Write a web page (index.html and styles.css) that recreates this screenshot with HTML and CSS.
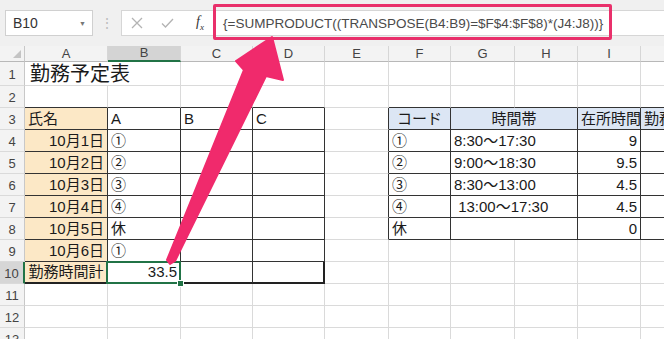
FILE: index.html
```html
<!DOCTYPE html>
<html>
<head>
  <title>勤務予定表</title>
  <link rel="stylesheet" href="styles.css">
</head>
<body>
  <div class="toolbar">
    <div class="namebox"><span>B10</span><span class="caret">▼</span></div>
    <div class="dots">⋮</div>
    <div class="fbar">
      <div class="fbtns">
        <svg width="12" height="12" viewBox="0 0 12 12"><path d="M1 1 L11 11 M11 1 L1 11" stroke="#b3b3b3" stroke-width="1.3" fill="none"/></svg>
        <svg width="13" height="12" viewBox="0 0 13 12"><path d="M1 6.5 L4.5 10 L12 2" stroke="#b3b3b3" stroke-width="1.3" fill="none"/></svg>
        <span class="fx">f<sub>x</sub></span>
      </div>
      <div class="formula">{=SUMPRODUCT((TRANSPOSE(B4:B9)=$F$4:$F$8)*(J4:J8))}</div>
    </div>
  </div>

  <table class="sheet">
    <colgroup>
      <col class="w-rh"><col class="w-a"><col class="w-b"><col class="w-c"><col class="w-d">
      <col class="w-e"><col class="w-f"><col class="w-g"><col class="w-h"><col class="w-i"><col class="w-j">
    </colgroup>
    <tr class="hrow">
      <td class="corner"><span class="tri"></span></td>
      <td class="ch">A</td><td class="ch sel">B</td><td class="ch">C</td><td class="ch">D</td>
      <td class="ch">E</td><td class="ch">F</td><td class="ch">G</td><td class="ch">H</td><td class="ch">I</td><td class="ch"></td>
    </tr>
    <tr class="r1">
      <td class="rh">1</td>
      <td class="title" colspan="2">勤務予定表</td><td></td><td></td><td></td><td></td><td></td><td></td><td></td><td></td>
    </tr>
    <tr>
      <td class="rh">2</td>
      <td class="top"></td><td class="top"></td><td class="top"></td><td class="top"></td><td></td>
      <td class="top"></td><td class="top"></td><td class="top"></td><td class="top"></td><td class="top"></td>
    </tr>
    <tr>
      <td class="rh">3</td>
      <td class="box y">氏名</td><td class="box">A</td><td class="box">B</td><td class="box">C</td><td class="lft"></td>
      <td class="box bl c">コード</td><td class="box bl c" colspan="2">時間帯</td><td class="box bl c">在所時間</td><td class="box bl">勤務時間</td>
    </tr>
    <tr>
      <td class="rh">4</td>
      <td class="box y r">10月1日</td><td class="box">①</td><td class="box"></td><td class="box"></td><td class="lft"></td>
      <td class="box">①</td><td class="box" colspan="2">8:30～17:30</td><td class="box r">9</td><td class="box"></td>
    </tr>
    <tr>
      <td class="rh">5</td>
      <td class="box y r">10月2日</td><td class="box">②</td><td class="box"></td><td class="box"></td><td class="lft"></td>
      <td class="box">②</td><td class="box" colspan="2">9:00～18:30</td><td class="box r">9.5</td><td class="box"></td>
    </tr>
    <tr>
      <td class="rh">6</td>
      <td class="box y r">10月3日</td><td class="box">③</td><td class="box"></td><td class="box"></td><td class="lft"></td>
      <td class="box">③</td><td class="box" colspan="2">8:30～13:00</td><td class="box r">4.5</td><td class="box"></td>
    </tr>
    <tr>
      <td class="rh">7</td>
      <td class="box y r">10月4日</td><td class="box">④</td><td class="box"></td><td class="box"></td><td class="lft"></td>
      <td class="box">④</td><td class="box" colspan="2">&nbsp;13:00～17:30</td><td class="box r">4.5</td><td class="box"></td>
    </tr>
    <tr>
      <td class="rh">8</td>
      <td class="box y r">10月5日</td><td class="box">休</td><td class="box"></td><td class="box"></td><td class="lft"></td>
      <td class="box">休</td><td class="box" colspan="2"></td><td class="box r">0</td><td class="box"></td>
    </tr>
    <tr>
      <td class="rh">9</td>
      <td class="box y r">10月6日</td><td class="box">①</td><td class="box"></td><td class="box"></td><td></td>
      <td></td><td></td><td></td><td></td><td></td>
    </tr>
    <tr>
      <td class="rh sel">10</td>
      <td class="box y tot c">勤務時間計</td><td class="box tot r cur">33.5</td><td class="box tot"></td><td class="box tot end"></td><td></td>
      <td></td><td></td><td></td><td></td><td></td>
    </tr>
    <tr>
      <td class="rh">11</td><td></td><td></td><td></td><td></td><td></td><td></td><td></td><td></td><td></td><td></td>
    </tr>
    <tr>
      <td class="rh">12</td><td></td><td></td><td></td><td></td><td></td><td></td><td></td><td></td><td></td><td></td>
    </tr>
    <tr>
      <td class="rh">13</td><td></td><td></td><td></td><td></td><td></td><td></td><td></td><td></td><td></td><td></td>
    </tr>
    <tr>
      <td class="rh"></td><td></td><td></td><td></td><td></td><td></td><td></td><td></td><td></td><td></td><td></td>
    </tr>
  </table>

  <!-- annotation: box round the formula and arrow down to B10 -->
  <div class="callout"></div>
  <svg class="arrow" width="664" height="339" viewBox="0 0 664 339">
    <polygon points="272,37 283,80 266,76 175,261 170,264 167,260 244,70 236,61" fill="#f02a6c" stroke="#f02a6c" stroke-width="2" stroke-linejoin="round"/>
  </svg>
</body>
</html>
```

FILE: styles.css
```css
body {
  margin: 0;
  width: 664px;
  height: 339px;
  overflow: hidden;
  position: relative;
  background: #fff;
  font-family: "Liberation Sans", "Noto Sans CJK JP", sans-serif;
}
.toolbar {
  display: flex;
  align-items: center;
  height: 46px;
  box-sizing: border-box;
  padding: 10px 0 10px 5px;
  background: #f0f0f0;
}
.namebox {
  display: flex;
  align-items: center;
  justify-content: space-between;
  width: 88px;
  height: 26px;
  box-sizing: border-box;
  padding: 0 6px 0 7px;
  background: #fff;
  border: 1px solid #d0d0d0;
  font-size: 14px;
  color: #333;
}
.caret {
  font-size: 7px;
  color: #777;
}
.dots {
  width: 28px;
  text-align: center;
  color: #bdbdbd;
  font-size: 14px;
}
.fbar {
  flex: 1;
  display: flex;
  align-items: center;
  height: 26px;
  background: #fff;
  border-top: 1px solid #d6d6d6;
  border-bottom: 1px solid #d6d6d6;
  border-left: 1px solid #d6d6d6;
  box-sizing: border-box;
}
.fbtns {
  display: flex;
  align-items: center;
  width: 92px;
  padding-left: 9px;
  gap: 18px;
  box-sizing: border-box;
}
.fx {
  font-family: "Liberation Serif", serif;
  font-style: italic;
  font-size: 14px;
  color: #333;
  margin-left: 4px;
}
.fx sub {
  font-size: 9px;
}
.formula {
  padding-left: 9px;
  font-size: 13.5px;
  color: #4a4a4a;
  white-space: nowrap;
}

.sheet {
  border-collapse: separate;
  border-spacing: 0;
  table-layout: fixed;
  width: 721px;
  font-size: 15px;
  color: #1a1a1a;
}
.w-rh { width: 25px; }
.w-a { width: 83px; }
.w-b { width: 73px; }
.w-c { width: 72px; }
.w-d { width: 72px; }
.w-e { width: 64px; }
.w-f { width: 62px; }
.w-g { width: 64px; }
.w-h { width: 63px; }
.w-i { width: 63px; }
.w-j { width: 80px; }
.sheet tr { height: 21px; }
.sheet tr.hrow { height: 16px; }
.sheet tr.r1 { height: 24px; }
.sheet td {
  box-sizing: border-box;
  padding: 0 3px;
  line-height: 18px;
  white-space: nowrap;
  overflow: hidden;
  border-right: 1px solid #dadada;
  border-bottom: 1px solid #dadada;
  vertical-align: middle;
}
.sheet td.corner {
  position: relative;
  background: #f3f3f3;
  border-right: 1px solid #c8c8c8;
  border-bottom: 1px solid #b8b8b8;
}
.tri {
  position: absolute;
  right: 3px;
  bottom: 3px;
  border-left: 8px solid transparent;
  border-bottom: 8px solid #c4c4c4;
}
.sheet td.ch {
  background: #f3f3f3;
  text-align: center;
  font-size: 13px;
  line-height: 14px;
  color: #444;
  border-right: 1px solid #d6d6d6;
  border-bottom: 1px solid #b8b8b8;
}
.sheet td.ch.sel {
  background: #d4d4d4;
  border-bottom: 2px solid #217346;
}
.sheet td.rh {
  background: #f3f3f3;
  text-align: center;
  font-size: 13px;
  color: #444;
  padding: 3px 0 0;
  border-right: 1px solid #c8c8c8;
  border-bottom: 1px solid #dadada;
}
.sheet td.rh.sel {
  background: #d6d6d6;
  border-right: 2px solid #217346;
}
.sheet td.title {
  font-size: 20px;
  line-height: 22px;
  padding-left: 5px;
  overflow: visible;
}
.sheet td.top { border-bottom-color: #333; }
.sheet td.lft { border-right-color: #333; }
.sheet td.box {
  border-right-color: #333;
  border-bottom-color: #333;
}
.sheet td.tot { border-bottom: 2px solid #222; }
.sheet td.end { border-right: 2px solid #222; }
.y { background: #fce8c6; }
.bl { background: #dce6f4; }
.c { text-align: center; }
.sheet td.r { text-align: right; }
.sheet td.cur {
  position: relative;
  overflow: visible;
}
.cur::after {
  content: "";
  position: absolute;
  left: -2px;
  top: -1px;
  right: -1px;
  bottom: -2px;
  border: 2px solid #217346;
}
.cur::before {
  content: "";
  position: absolute;
  right: -4px;
  bottom: -5px;
  width: 5px;
  height: 5px;
  background: #217346;
  border: 1px solid #fff;
  z-index: 1;
}

.callout {
  position: absolute;
  left: 213px;
  top: 4px;
  width: 399px;
  height: 36px;
  box-sizing: border-box;
  border: 3px solid #e9306b;
  border-radius: 2px;
}
.arrow {
  position: absolute;
  left: 0;
  top: 0;
  pointer-events: none;
}
```
